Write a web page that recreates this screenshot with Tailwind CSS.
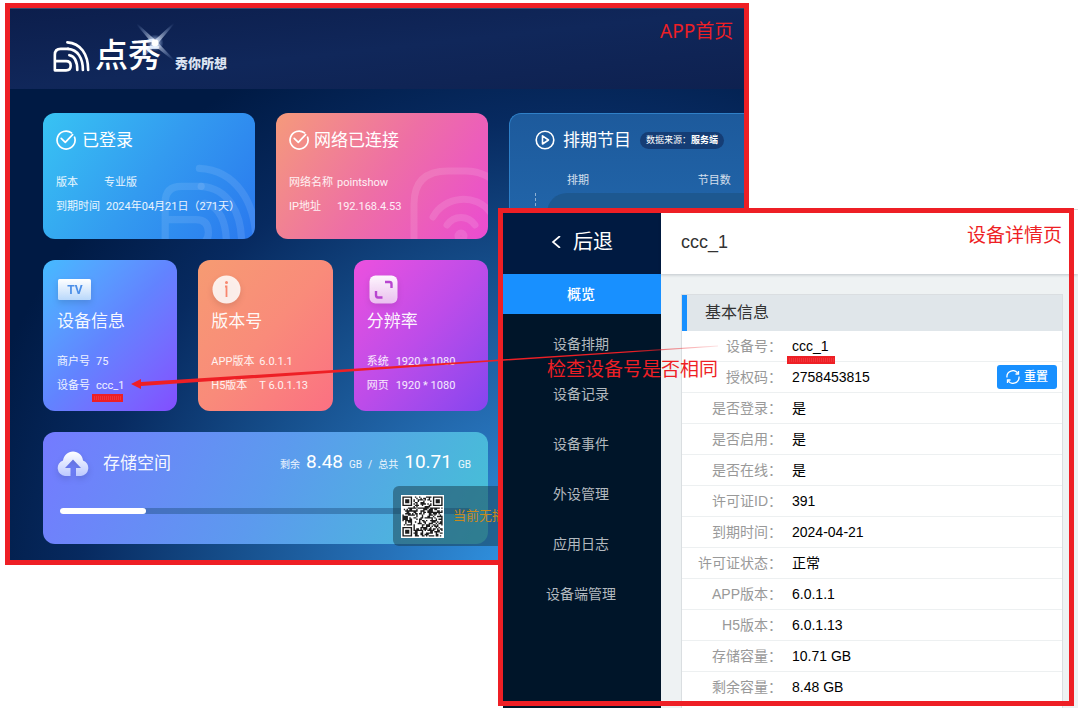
<!DOCTYPE html>
<html lang="zh-CN">
<head>
<meta charset="utf-8">
<meta name="viewport" content="width=device-width, initial-scale=1">
<title>设备号检查</title>
<script src="https://cdn.jsdelivr.net/npm/@tailwindcss/browser@4"></script>
</head>
<body class="bg-white">
<svg class="hidden" aria-hidden="true">
  <symbol id="mark" viewBox="160 120 120 100">
    <g fill="none" stroke="currentColor" stroke-width="8" stroke-linecap="round" stroke-linejoin="round">
      <path d="M208 147H186Q168 147 168 165V212H202Q216 212 216 198Q216 184 202 184H168"/>
      <path d="M206 127C246 129 269 164 269 211"/>
      <path d="M208 147C238 149 253 176 253 211"/>
      <path d="M212 166C229 169 236 188 236 211"/>
    </g>
  </symbol>
  <symbol id="check" viewBox="0 0 20 20">
    <g fill="none" stroke="currentColor" stroke-width="1.7" stroke-linecap="round" stroke-linejoin="round">
      <path d="M18.6 7.2A9 9 0 1 1 15.5 2.9"/>
      <path d="M5.2 8.4L9.3 12.4L16.6 4.6"/>
    </g>
  </symbol>
</svg>
<main class="relative h-screen overflow-hidden">

  <!-- App home -->
  <section class="relative mt-[3px] ml-[5px] w-[69%] overflow-hidden border-5 border-[#ee1f25] bg-[radial-gradient(circle_at_560px_600px,#3a9df0_0px,#2f90de_80px,#2671b8_190px,#164f8c_340px,#072a60_490px,#001a44_620px)] pb-4 font-['Roboto','Noto_Sans_CJK_SC',sans-serif] text-white">
    <header class="flex h-[81px] items-start border-t border-[#2b4a6e] bg-linear-to-br from-[#0c1e4c] via-[#10275a] to-[#0e2150] pl-10">
      <div class="relative mt-[29px] flex items-center">
        <svg class="mt-px ml-[2px] h-[33px] w-10"><use href="#mark"/></svg>
        <h1 class="ml-[3px] text-[33px] leading-9 font-medium">点秀</h1>
        <svg class="absolute -top-6 left-[74px] size-[60px]" viewBox="0 0 56 56">
          <defs><radialGradient id="glow"><stop offset="0" stop-color="#fff" stop-opacity=".95"/><stop offset="1" stop-color="#9fc4ff" stop-opacity="0"/></radialGradient></defs>
          <path d="M5 2L29 24L53 2L32 27L54 50L29 30L8 50L26 27Z" fill="url(#glow)" opacity=".8"/>
          <circle cx="29" cy="27" r="8" fill="url(#glow)"/><rect x="26" y="24" width="6" height="6" rx="2" fill="#fff"/>
        </svg>
        <p class="mt-4 ml-[14px] text-[13px] leading-4 font-black text-[#dce4f2]">秀你所想</p>
      </div>
    </header>

    <div class="flex gap-[21px] pt-6 pl-[33px]">
      <div class="flex w-[445px] shrink-0 flex-col gap-[21px]">
        <div class="grid grid-cols-2 gap-[21px]">
          <article class="relative h-[126px] overflow-hidden rounded-xl bg-linear-[125deg] from-[#38c3f3] via-[#339bf0] to-[#2a78ee] px-[13px] pt-4">
            <svg class="absolute top-[49px] left-[115px] h-[90px] w-[108px] text-white/10"><use href="#mark"/></svg>
            <h2 class="flex h-[22px] items-center gap-[6px] text-[17px] leading-[22px]"><svg class="size-5"><use href="#check"/></svg>已登录</h2>
            <dl class="relative mt-5 grid grid-cols-[48px_1fr] text-[11px] leading-6 whitespace-nowrap text-white/90">
              <dt>版本</dt><dd>专业版</dd>
              <dt>到期时间</dt><dd class="pl-[2px]">2024年04月21日（271天）</dd>
            </dl>
          </article>
          <article class="relative h-[126px] overflow-hidden rounded-xl bg-linear-[125deg] from-[#f59a7b] via-[#ee6fa5] to-[#ea4bd2] px-[13px] pt-4">
            <svg class="absolute right-0 bottom-0 h-[75px] w-[80px]" viewBox="0 0 80 75" fill="none" stroke="#fff" stroke-opacity=".12" stroke-width="7" stroke-linecap="round">
              <path d="M6 78V40Q6 7 40 7H58Q74 7 88 18"/>
              <path d="M25 53C36 32 68 29 82 48"/>
              <path d="M39 61C46 51 60 51 67 61"/>
              <circle cx="53" cy="72" r="3"/>
            </svg>
            <h2 class="flex h-[22px] items-center gap-[5px] text-[17px] leading-[22px]"><svg class="size-5"><use href="#check"/></svg>网络已连接</h2>
            <dl class="relative mt-5 grid grid-cols-[48px_1fr] text-[11px] leading-6 whitespace-nowrap text-white/90">
              <dt>网络名称</dt><dd>pointshow</dd>
              <dt>IP地址</dt><dd>192.168.4.53</dd>
            </dl>
          </article>
        </div>

        <div class="grid grid-cols-3 gap-[21px]">
          <article class="h-[151px] rounded-xl bg-linear-to-br from-[#44baff] via-[#6283ff] to-[#824dff] px-[14px] pt-[15px]">
            <svg class="ml-px h-[29px] w-8 overflow-visible drop-shadow-md" viewBox="0 0 32 29">
              <defs><linearGradient id="tv" x2="0" y2="1"><stop stop-color="#fff"/><stop offset="1" stop-color="#b9d8fb"/></linearGradient></defs>
              <rect x="0" y="4" width="33" height="21" rx="1.500" fill="url(#tv)"/>
              <text x="17" y="19" text-anchor="middle" font-size="12" font-weight="700" fill="#4c8fe8">TV</text>
            </svg>
            <h2 class="mt-[6px] text-[17px] leading-[22px] text-white/95">设备信息</h2>
            <dl class="mt-[18px] grid grid-cols-[39px_1fr] text-[11px] leading-6 text-white/90">
              <dt>商户号</dt><dd>75</dd><dt>设备号</dt><dd>ccc_1</dd>
            </dl>
          </article>
          <article class="h-[151px] rounded-xl bg-linear-to-br from-[#f69b72] via-[#f98b7a] to-[#fb7082] px-[13px] pt-[15px]">
            <svg class="ml-px size-[29px] drop-shadow-md" viewBox="0 0 29 29">
              <circle cx="14.500" cy="14.500" r="14" fill="#fff" fill-opacity=".85"/>
              <circle cx="14.500" cy="7.500" r="1.500" fill="#f7876f"/><path d="M13 11.500H14.500V22" fill="none" stroke="#f7876f" stroke-width="1.800"/>
            </svg>
            <h2 class="mt-[6px] text-[17px] leading-[22px] text-white/95">版本号</h2>
            <dl class="mt-[18px] grid grid-cols-[48px_1fr] text-[11px] leading-6 whitespace-nowrap text-white/90">
              <dt>APP版本</dt><dd>6.0.1.1</dd><dt>H5版本</dt><dd>T 6.0.1.13</dd>
            </dl>
          </article>
          <article class="h-[151px] rounded-xl bg-linear-to-br from-[#ec50de] via-[#bd4ce9] to-[#8544ef] px-[13px] pt-[15px]">
            <svg class="ml-[2px] size-[29px] drop-shadow-md" viewBox="0 0 29 29">
              <defs><linearGradient id="rs" x2="0" y2="1"><stop stop-color="#fff" stop-opacity=".95"/><stop offset="1" stop-color="#fff" stop-opacity=".65"/></linearGradient></defs>
              <rect x=".500" y=".500" width="28" height="28" rx="6" fill="url(#rs)"/>
              <path d="M16 7H20.500Q22.500 7 22.500 9V13M7 16V20Q7 22.500 9 22.500H13.500" fill="none" stroke="#b845d0" stroke-width="2.400"/>
            </svg>
            <h2 class="mt-[6px] text-[17px] leading-[22px] text-white/95">分辨率</h2>
            <dl class="mt-[18px] grid grid-cols-[29px_1fr] text-[11px] leading-6 whitespace-nowrap text-white/90">
              <dt>系统</dt><dd>1920 * 1080</dd><dt>网页</dt><dd>1920 * 1080</dd>
            </dl>
          </article>
        </div>

        <article class="h-[112px] rounded-xl bg-linear-[115deg] from-[#747bff] via-[#5c9aee] to-[#45c1d5] pt-4 pr-[17px] pl-[14px]">
          <div class="flex h-[30px] items-center">
            <svg class="h-[27px] w-8 drop-shadow-md" viewBox="0 0 32 27">
              <defs><linearGradient id="cl" x2="0" y2="1"><stop stop-color="#fff"/><stop offset="1" stop-color="#bcc9ff"/></linearGradient></defs>
              <path fill="url(#cl)" d="M8 26A8 8 0 0 1 6 10.500C7 5 11 1.500 16 1.500S25.500 5 26 10.500A8 8 0 0 1 24 26H19V18H24L16 9.500L8 18H13.500V26Z"/>
            </svg>
            <h2 class="ml-[14px] text-[17px] leading-[22px] text-white/95">存储空间</h2>
            <p class="ml-auto flex items-baseline gap-[6px] text-[10px] leading-[22px] text-white/90">剩余 <b class="text-[19px] font-normal text-white">8.48</b> GB <span>/</span> 总共 <b class="text-[19px] font-normal text-white">10.71</b> GB</p>
          </div>
          <div role="progressbar" aria-label="存储空间" aria-valuenow="21" class="mt-[30px] ml-[3px] h-[6px] rounded-full bg-[#1f4f80]/45">
            <div class="h-full rounded-full bg-white" style="width:21%"></div>
          </div>
        </article>
      </div>

      <article class="flex-1 rounded-l-xl border-t border-l border-[#2f80c8] bg-linear-to-t from-[#2f88d4] to-[#1d5a9c] pt-[15px] pl-[25px]">
        <div class="flex h-[22px] items-center">
          <svg class="size-5" viewBox="0 0 20 20" fill="none" stroke="#fff" stroke-width="1.600" stroke-linejoin="round"><circle cx="10" cy="10" r="8.800"/><path d="M7.500 5.800V14L13.500 10Z"/></svg>
          <h2 class="ml-2 text-[17px] leading-[22px]">排期节目</h2>
          <p class="ml-[9px] rounded-full bg-[#153d75] px-[6px] text-[9px] leading-[17px] whitespace-nowrap">数据来源：<b>服务端</b></p>
        </div>
        <div class="mt-[18px] mr-[13px] ml-8 flex justify-between text-[11px] leading-6 text-white/80"><span>排期</span><span>节目数</span></div>
        <div class="h-[300px] border-l border-dashed border-white/50 pl-[11px]"><div class="h-full rounded-tl-[20px] bg-[#1d5890]"></div></div>
      </article>
    </div>

    <!-- Player notice -->
    <aside class="absolute top-[478px] left-[383px] flex h-[60px] w-[180px] items-center rounded-md bg-[#183c4c]/50 pl-2 text-[13px] text-[#c98a1f]">
      <svg id="qr" class="size-[43px] bg-white" viewBox="-1 -1 31 31" role="img" aria-label="二维码"></svg>
      <span class="ml-[9px]">当前无播</span>
    </aside>
  </section>

  <!-- Device detail -->
  <section class="absolute top-[209px] right-0 bottom-0 left-[503px] flex overflow-hidden border-t border-[#d9d9d9] bg-[#eef2f3] font-['Liberation_Sans','Noto_Sans_CJK_SC',sans-serif] text-sm">
    <nav class="w-[158px] shrink-0 bg-[#001529] text-center text-[#b3b9bf]">
      <a href="#" class="flex h-16 items-center justify-center gap-3 bg-[#001a41] text-xl text-white">
        <svg class="h-3 w-[10px]" viewBox="0 0 10 12" fill="none" stroke="currentColor" stroke-width="1.700"><path d="M9 0L2 6L9 12"/></svg>后退</a>
      <a href="#" class="mb-[10px] block pr-[2px] leading-10 bg-[#1890ff] font-medium text-white">概览</a>
      <a href="#" class="mb-[10px] block pr-[2px] leading-10">设备排期</a>
      <a href="#" class="mb-[10px] block pr-[2px] leading-10">设备记录</a>
      <a href="#" class="mb-[10px] block pr-[2px] leading-10">设备事件</a>
      <a href="#" class="mb-[10px] block pr-[2px] leading-10">外设管理</a>
      <a href="#" class="mb-[10px] block pr-[2px] leading-10">应用日志</a>
      <a href="#" class="mb-[10px] block pr-[2px] leading-10">设备端管理</a>
    </nav>
    <div class="min-w-0 flex-1">
      <header class="flex h-16 items-center bg-white pl-5 shadow-[0_1px_3px_rgba(0,21,41,0.2)]"><h2 class="text-lg text-[#333]">ccc_1</h2></header>
      <div class="mt-5 mr-[15px] ml-5 h-[460px] border border-[#dadee1] bg-white">
        <h3 class="border-l-5 border-[#1890ff] bg-[#e0e6ea] pl-[18px] text-base leading-9 text-[#333]">基本信息</h3>
        <table class="w-full border-collapse text-black">
          <tbody>
            <tr class="h-[30px] border-b border-[#edf0f1]"><th class="w-[100px] text-right font-normal text-[#999]">设备号：</th><td class="pl-[10px]">ccc_1</td></tr>
            <tr class="h-[31px] border-b border-[#edf0f1]"><th class="text-right font-normal text-[#999]">授权码：</th><td class="pr-[5px] pl-[10px]"><div class="flex items-center justify-between">2758453815
              <button class="flex h-6 w-[60px] items-center justify-center gap-1 rounded-[3px] bg-[#1890ff] text-xs font-medium text-white"><svg class="size-[14px]" viewBox="0 0 14 14" fill="none" stroke="currentColor" stroke-width="1.300"><path d="M1 7.500A6 6 0 0 1 12 3.500M13 6.500A6 6 0 0 1 2 10.500"/><path d="M12.500 1V4H9.500M1.500 13V10H4.500"/></svg>重置</button></div></td></tr>
            <tr class="h-[31px] border-b border-[#edf0f1]"><th class="text-right font-normal text-[#999]">是否登录：</th><td class="pl-[10px]">是</td></tr>
            <tr class="h-[31px] border-b border-[#edf0f1]"><th class="text-right font-normal text-[#999]">是否启用：</th><td class="pl-[10px]">是</td></tr>
            <tr class="h-[31px] border-b border-[#edf0f1]"><th class="text-right font-normal text-[#999]">是否在线：</th><td class="pl-[10px]">是</td></tr>
            <tr class="h-[31px] border-b border-[#edf0f1]"><th class="text-right font-normal text-[#999]">许可证ID：</th><td class="pl-[10px]">391</td></tr>
            <tr class="h-[31px] border-b border-[#edf0f1]"><th class="text-right font-normal text-[#999]">到期时间：</th><td class="pl-[10px]">2024-04-21</td></tr>
            <tr class="h-[31px] border-b border-[#edf0f1]"><th class="text-right font-normal text-[#999]">许可证状态：</th><td class="pl-[10px]">正常</td></tr>
            <tr class="h-[31px] border-b border-[#edf0f1]"><th class="text-right font-normal text-[#999]">APP版本：</th><td class="pl-[10px]">6.0.1.1</td></tr>
            <tr class="h-[31px] border-b border-[#edf0f1]"><th class="text-right font-normal text-[#999]">H5版本：</th><td class="pl-[10px]">6.0.1.13</td></tr>
            <tr class="h-[31px] border-b border-[#edf0f1]"><th class="text-right font-normal text-[#999]">存储容量：</th><td class="pl-[10px]">10.71 GB</td></tr>
            <tr class="h-[31px] border-b border-[#edf0f1]"><th class="text-right font-normal text-[#999]">剩余容量：</th><td class="pl-[10px]">8.48 GB</td></tr>
          </tbody>
        </table>
      </div>
    </div>
  </section>

  <!-- Annotations -->
  <div class="pointer-events-none absolute top-[208px] right-1 bottom-[2px] left-[498px] border-5 border-[#ee1f25]"></div>
  <div class="pointer-events-none absolute inset-0 font-['Noto_Sans','Noto_Sans_CJK_SC',sans-serif] text-[19px] leading-6 text-[#ee1f25]">
    <svg class="absolute top-0 left-0 h-[708px] w-[1078px]" viewBox="0 0 1078 708">
      <defs><linearGradient id="fade" gradientUnits="userSpaceOnUse" x1="130" y1="0" x2="720" y2="0"><stop offset=".85" stop-color="#ee1f25"/><stop offset=".9" stop-color="#ee1f25" stop-opacity=".6"/><stop offset="1" stop-color="#ee1f25" stop-opacity=".1"/></linearGradient></defs>
      <path fill="url(#fade)" d="M131 384L141 379V382L500 359.500L718 345.500V346.500L500 361L141 386V389Z"/>
      <path fill="#ee1f25" d="M92 394H123V402H92ZM787 356H835V364H787Z"/>
      <path stroke="#f8686c" stroke-width="4" stroke-dasharray="1 1" opacity=".3" d="M94 398H122M789 360H834"/>
    </svg>
    <p class="absolute top-[19px] left-[660px]">APP首页</p>
    <p class="absolute top-[223px] right-4">设备详情页</p>
    <p class="absolute top-[357px] left-[547px]">检查设备号是否相同</p>
  </div>
</main>
<script>
  // 29x29 QR modules: finder corners plus a seeded data fill
  const finder = (x, y) => {
    if (x < -1 || y < -1) return null;
    const m = Math.max(Math.abs(x - 3), Math.abs(y - 3));
    return m > 4 ? null : m !== 2 && m !== 4;
  };
  let seed = 7, d = '';
  for (let y = 0; y < 29; y++) for (let x = 0; x < 29; x++) {
    seed = (seed * 1103515245 + 12345) % 2147483648;
    const on = finder(x, y) ?? finder(x - 22, y) ?? finder(x, y - 22) ?? (seed / 2147483648 > .47);
    if (on) d += `M${x} ${y}h1v1h-1z`;
  }
  const p = document.createElementNS('http://www.w3.org/2000/svg', 'path');
  p.setAttribute('d', d);
  p.setAttribute('fill', '#1c1c1c');
  document.getElementById('qr').append(p);
</script>
</body>
</html>
